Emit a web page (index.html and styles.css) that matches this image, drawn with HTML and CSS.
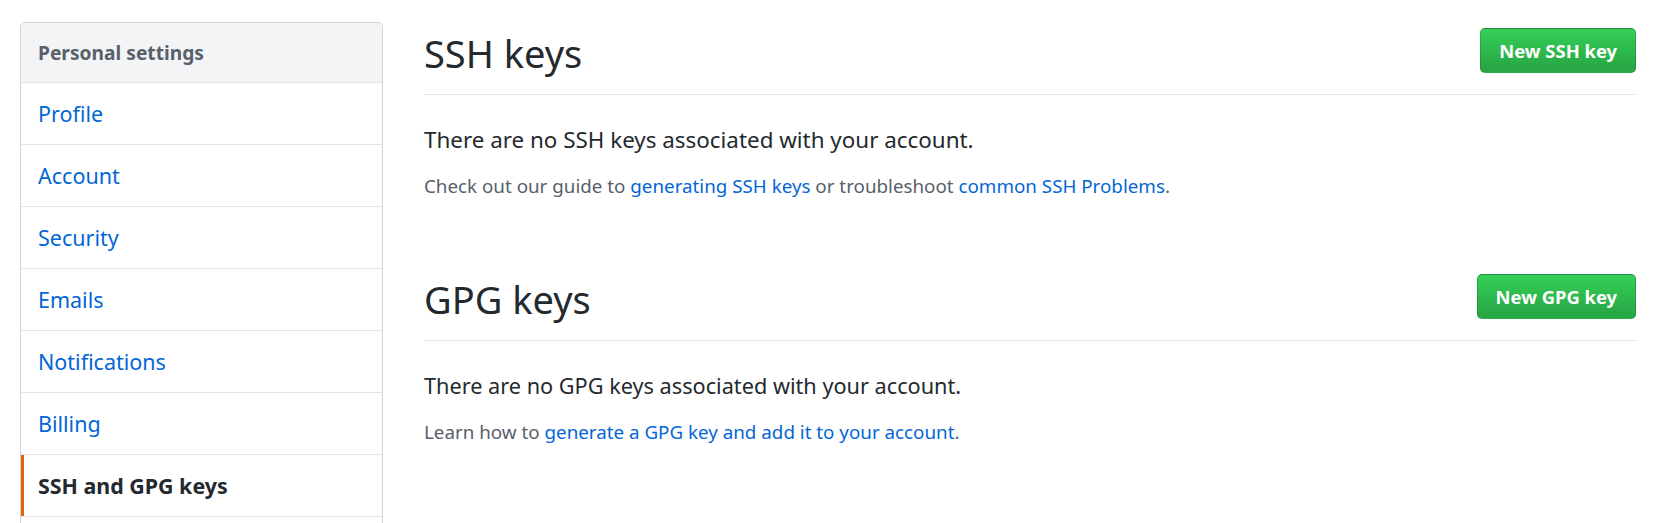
FILE: index.html
```html
<!DOCTYPE html>
<html lang="en">
<head>
<meta charset="utf-8">
<title>SSH and GPG keys</title>
<link rel="stylesheet" href="styles.css">
</head>
<body>
<div class="page">
  <nav class="menu">
    <div class="menu-heading">Personal settings</div>
    <a class="menu-item" href="#">Profile</a>
    <a class="menu-item" href="#">Account</a>
    <a class="menu-item" href="#">Security</a>
    <a class="menu-item" href="#">Emails</a>
    <a class="menu-item" href="#">Notifications</a>
    <a class="menu-item" href="#">Billing</a>
    <a class="menu-item selected" href="#">SSH and GPG keys</a>
  </nav>
  <main class="content">
    <section class="keys">
      <div class="subhead">
        <h2 class="subhead-heading">SSH keys</h2>
        <a class="btn" href="#">New SSH key</a>
      </div>
      <p class="lead">There are no SSH keys associated with your account.</p>
      <p class="note">Check out our guide to <a href="#">generating SSH keys</a> or troubleshoot <a href="#">common SSH Problems</a>.</p>
    </section>
    <section class="keys second">
      <div class="subhead">
        <h2 class="subhead-heading">GPG keys</h2>
        <a class="btn" href="#">New GPG key</a>
      </div>
      <p class="lead lead-gpg">There are no GPG keys associated with your account.</p>
      <p class="note">Learn how to <a href="#">generate a GPG key and add it to your account</a>.</p>
    </section>
  </main>
</div>
</body>
</html>
```

FILE: styles.css
```css
html, body {
  margin: 0;
  padding: 0;
  background: #fff;
}
body {
  font-family: "Noto Sans", "Open Sans", sans-serif;
  color: #24292e;
  font-size: 22px;
  line-height: 33px;
}
a { text-decoration: none; color: #0366d6; }

.page {
  display: flex;
  align-items: flex-start;
  padding: 22px 39px 0 20px;
  gap: 41px;
}

.menu {
  flex: 0 0 363px;
  box-sizing: border-box;
  border: 1px solid #d1d5da;
  border-bottom: 0;
  border-radius: 5px 5px 0 0;
  display: flex;
  flex-direction: column;
  overflow: hidden;
  padding-bottom: 20px;
}
.menu-heading {
  background: #f3f4f6;
  color: #586069;
  font-weight: 700;
  font-size: 19.2px;
  padding: 13px 17px;
  border-bottom: 1px solid #e1e4e8;
}
.menu-item {
  position: relative;
  padding: 14px 17px;
  border-bottom: 1px solid #e1e4e8;
  color: #0366d6;
  font-size: 21.5px;
}
.menu-item.selected {
  color: #24292e;
  font-weight: 700;
  font-size: 21.4px;
}
.menu-item.selected::before {
  content: "";
  position: absolute;
  left: 0;
  top: 0;
  bottom: 0;
  width: 3px;
  background: #e36209;
}

.content {
  flex: 1;
  min-width: 0;
}
.keys.second { margin-top: 67px; }

.subhead {
  display: flex;
  justify-content: space-between;
  align-items: flex-start;
  padding: 6px 0 16px;
  border-bottom: 1px solid #e1e4e8;
}
.subhead-heading {
  margin: 0;
  font-size: 38px;
  line-height: 50px;
  font-weight: 400;
}
.btn {
  display: inline-flex;
  align-items: center;
  justify-content: center;
  box-sizing: border-box;
  height: 45px;
  padding: 0 18px 1px;
  color: #fff;
  font-weight: 700;
  font-size: 18.4px;
  background: linear-gradient(180deg, #34d058 0%, #28a745 90%);
  border: 1px solid rgba(27, 31, 35, 0.2);
  border-radius: 5px;
}

.lead {
  margin: 28px 0 0;
  font-size: 22.4px;
}
.lead-gpg {
  font-size: 21.7px;
}
.note {
  margin: 15px 0 0;
  font-size: 18.8px;
  line-height: 30px;
  color: #586069;
}
```
